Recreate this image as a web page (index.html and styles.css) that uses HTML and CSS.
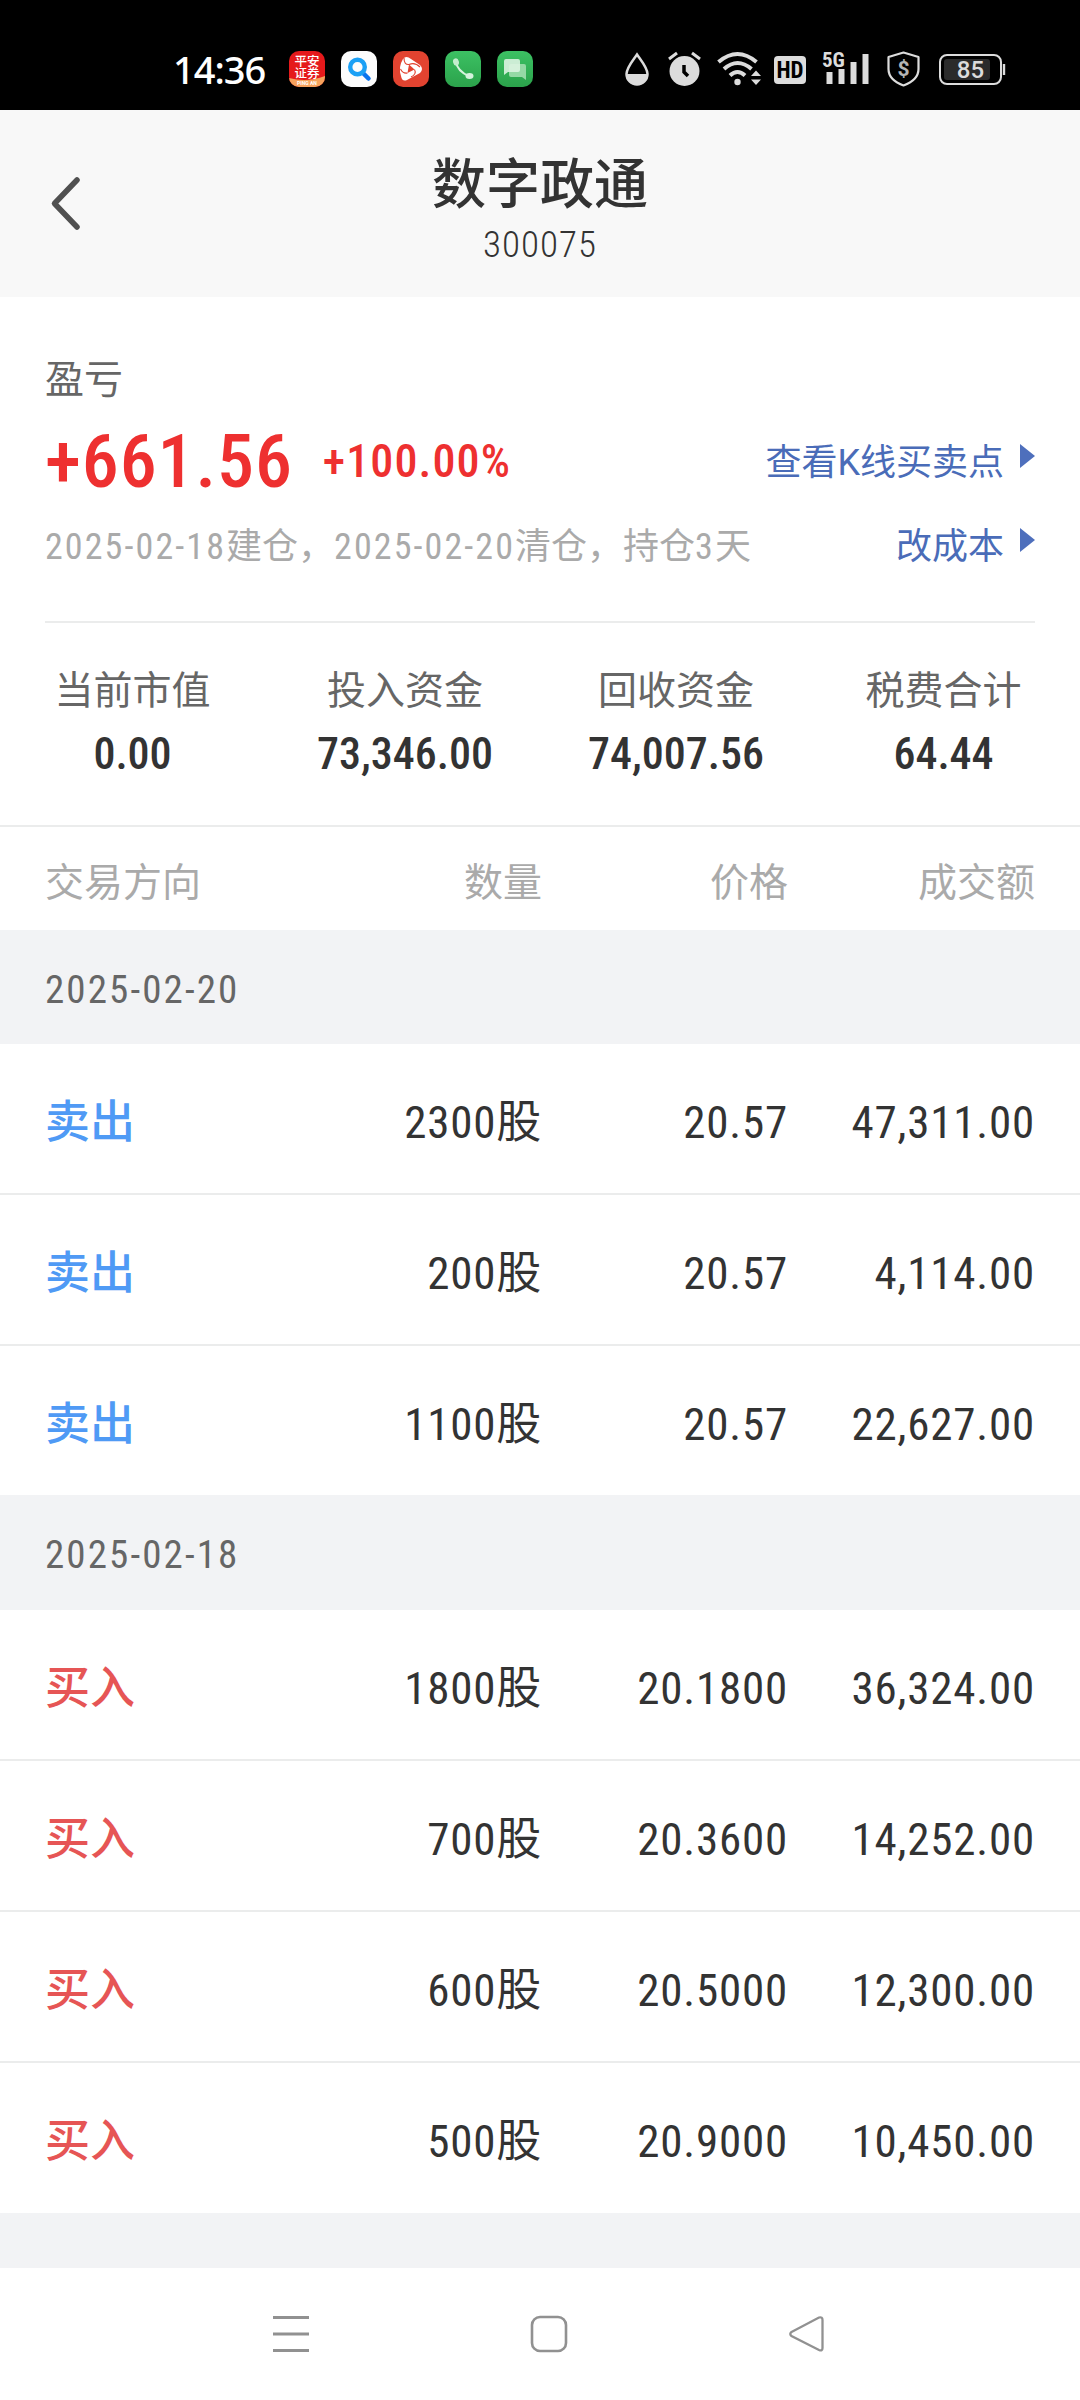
FILE: index.html
```html
<!DOCTYPE html>
<html lang="zh-CN">

<head>
    <meta charset="UTF-8">
    <meta name="viewport" content="width=device-width, initial-scale=1.0">
    <title>数字政通 300075</title>
    <link rel="stylesheet" href="styles.css">
</head>

<body>

    <div class="status-bar">
        <div class="clock">14:36</div>
        <div class="apps">
            <svg width="36" height="36" viewBox="0 0 36 36">
                <defs>
                    <clipPath id="appClip"><rect width="36" height="36" rx="10"/></clipPath>
                    <linearGradient id="green" x1="0" y1="0" x2="0" y2="1">
                        <stop offset="0" stop-color="#3cc163"/>
                        <stop offset="1" stop-color="#2ba24b"/>
                    </linearGradient>
                </defs>
                <g clip-path="url(#appClip)">
                    <rect width="36" height="36" fill="#e5191b"/>
                    <path d="M0 27Q18 32 36 25V36H0Z" fill="#f6a25c"/>
                    <text class="app-name" x="18" y="15" text-anchor="middle">平安</text>
                    <text class="app-name" x="18" y="26.500" text-anchor="middle">证券</text>
                    <text class="app-sub" x="18" y="34" text-anchor="middle">PING AN</text>
                </g>
            </svg>
            <svg width="36" height="36" viewBox="0 0 36 36">
                <rect width="36" height="36" rx="10" fill="#fcfcfc"/>
                <path d="M22 22L27.500 27.500" stroke="#0b74ee" stroke-width="4.500" stroke-linecap="round"/>
                <circle cx="16.500" cy="16" r="7.300" fill="none" stroke="#1ba0f5" stroke-width="4.400"/>
            </svg>
            <svg width="36" height="36" viewBox="0 0 36 36">
                <rect width="36" height="36" rx="10" fill="#e24330"/>
                <path d="M10 8Q13 4 18 8L27 14Q31 18 27 22L14 29Q9 31 8 25Q5 16 10 8Z" fill="#fff"/>
                <path d="M16 13.500L21.500 18.500L14.500 22Z" fill="#e24330"/>
                <path d="M16 13.500Q11 14 11 7M21.500 18.500Q24 23 18 26M14.500 22Q10 23 7.500 18M16 13.500Q22 11 27 16" fill="none" stroke="#e24330" stroke-width="1.100"/>
            </svg>
            <svg width="36" height="36" viewBox="0 0 36 36">
                <rect width="36" height="36" rx="10" fill="url(#green)"/>
                <path d="M11 10.500Q12 20 24.500 25.500" fill="none" stroke="#d5f3dd" stroke-width="2.200"/>
                <ellipse cx="11" cy="11" rx="2.900" ry="3.700" fill="#c4edce" transform="rotate(-15 11 11)"/>
                <ellipse cx="24.500" cy="25" rx="4" ry="2.900" fill="#d5f3dd"/>
            </svg>
            <svg width="36" height="36" viewBox="0 0 36 36">
                <rect width="36" height="36" rx="10" fill="url(#green)"/>
                <path d="M14 13H27Q29 13 29 15V29L25 26H14Q12 26 12 24V15Q12 13 14 13Z" fill="#95d9a5"/>
                <path d="M9 8H21Q23 8 23 10V19Q23 21 21 21H11L7 24V10Q7 8 9 8Z" fill="#dcf3e1" fill-opacity=".9"/>
            </svg>
        </div>
        <div class="system">
            <svg class="drop" width="24" height="36" viewBox="0 0 24 36">
                <path d="M12 3.500C7.500 10 1.500 17 1.500 23A10.500 10.500 0 0 0 22.500 23C22.500 17 16.500 10 12 3.500Z" fill="none" stroke="#dcdcdc" stroke-width="2.500"/>
                <path d="M1 23H23A11 11 0 0 1 1 23Z" fill="#dcdcdc"/>
            </svg>
            <svg class="alarm" width="31" height="36" viewBox="0 0 31 36">
                <circle cx="15.500" cy="20" r="15" fill="#dcdcdc"/>
                <path d="M0 8L8 2M31 8L23 2" stroke="#dcdcdc" stroke-width="3"/>
                <path d="M15 14V21L19 25" fill="none" stroke="#000" stroke-width="3.500"/>
            </svg>
            <svg class="wifi" width="44" height="36" viewBox="0 0 44 36">
                <g fill="none" stroke="#dcdcdc" stroke-width="4">
                    <path d="M1.500 11Q20.500-5 39.500 11"/>
                    <path d="M7 18Q20.500 6 34.500 18"/>
                    <path d="M13 24.500Q20.500 17.500 28 24.500"/>
                </g>
                <circle cx="20.500" cy="31" r="3.200" fill="#dcdcdc"/>
                <path d="M34 25L39 19.500L44 25ZM34 28.500H44L39 34Z" fill="#dcdcdc"/>
            </svg>
            <svg class="voice" width="32" height="36" viewBox="0 0 32 36">
                <rect y="5" width="32" height="28" rx="4" fill="#dcdcdc"/>
                <text class="hd" x="16" y="27" text-anchor="middle">HD</text>
            </svg>
            <svg class="signal" width="46" height="36" viewBox="0 0 46 36">
                <text class="net" x="-1" y="16">5G</text>
                <path d="M3.500 21H9.500V33H3.500ZM15.500 18H21.500V33H15.500ZM27.500 11H33.500V33H27.500ZM39.500 3H45.500V33H39.500Z" fill="#dcdcdc"/>
            </svg>
            <svg class="shield" width="33" height="36" viewBox="0 0 33 36">
                <path d="M16.500 1.500L31.500 6V18Q31.500 29 16.500 34.500Q1.500 29 1.500 18V6Z" fill="none" stroke="#dcdcdc" stroke-width="2.200" stroke-linejoin="round"/>
                <text class="dollar" x="16.500" y="25" text-anchor="middle">$</text>
            </svg>
            <svg class="battery" width="67" height="36" viewBox="0 0 67 36">
                <rect x="1" y="4" width="61" height="29" rx="7" fill="none" stroke="#dcdcdc" stroke-width="2"/>
                <rect x="5" y="8" width="46" height="21" rx="3" fill="#2b2b2b"/>
                <path d="M65 13V24" stroke="#dcdcdc" stroke-width="2.400"/>
                <text class="level" x="31.500" y="26.500" text-anchor="middle">85</text>
            </svg>
        </div>
    </div>

    <div class="header">
        <svg class="back" width="34" height="60" viewBox="0 0 34 60">
            <path d="M29 6L6.500 29.500L29 53" fill="none" stroke="#505050" stroke-width="5.500" stroke-linecap="round" stroke-linejoin="round"/>
        </svg>
        <h1>数字政通</h1>
        <div class="code">300075</div>
    </div>

    <div class="summary">
        <div class="label">盈亏</div>
        <div class="line profit">
            <span class="amount">+661.56</span>
            <span class="percent">+100.00%</span>
            <a class="link">查看K线买卖点<i class="arrow"></i></a>
        </div>
        <div class="line period">
            <span><span class="num">2025-02-18</span>建仓，<span class="num">2025-02-20</span>清仓，持仓<span class="num">3</span>天</span>
            <a class="link">改成本<i class="arrow"></i></a>
        </div>
    </div>

    <div class="stats">
        <div class="stat">当前市值<b>0.00</b></div>
        <div class="stat">投入资金<b>73,346.00</b></div>
        <div class="stat">回收资金<b>74,007.56</b></div>
        <div class="stat">税费合计<b>64.44</b></div>
    </div>

    <div class="trades">
        <div class="row head"><span>交易方向</span><span>数量</span><span>价格</span><span>成交额</span></div>

        <div class="date">2025-02-20</div>
        <div class="row"><span class="sell">卖出</span><span>2300股</span><span>20.57</span><span>47,311.00</span></div>
        <div class="row"><span class="sell">卖出</span><span>200股</span><span>20.57</span><span>4,114.00</span></div>
        <div class="row"><span class="sell">卖出</span><span>1100股</span><span>20.57</span><span>22,627.00</span></div>

        <div class="date">2025-02-18</div>
        <div class="row"><span class="buy">买入</span><span>1800股</span><span>20.1800</span><span>36,324.00</span></div>
        <div class="row"><span class="buy">买入</span><span>700股</span><span>20.3600</span><span>14,252.00</span></div>
        <div class="row"><span class="buy">买入</span><span>600股</span><span>20.5000</span><span>12,300.00</span></div>
        <div class="row"><span class="buy">买入</span><span>500股</span><span>20.9000</span><span>10,450.00</span></div>
    </div>

    <div class="nav">
        <svg width="38" height="38" viewBox="0 0 38 38">
            <path d="M1 2.500H37M1 19H37M1 35.500H37" stroke="#919191" stroke-width="3"/>
        </svg>
        <svg width="38" height="38" viewBox="0 0 38 38">
            <rect x="2" y="2" width="34" height="34" rx="8" fill="none" stroke="#919191" stroke-width="2.600"/>
        </svg>
        <svg width="38" height="38" viewBox="0 0 38 38">
            <path d="M3.500 17L31 2.500Q34.500 1.500 34.500 5V33Q34.500 36.500 31 35L3.500 21Q1 19 3.500 17Z" fill="none" stroke="#919191" stroke-width="2.300"/>
        </svg>
    </div>

</body>

</html>
```

FILE: styles.css
```css
* {
    box-sizing: border-box;
}

body {
    margin: 0;
    width: 1080px;
    height: 2400px;
    background: #fff;
    color: #333;
    font-family: "Roboto Condensed", Roboto, "Noto Sans CJK SC", sans-serif;
}

/* Phone status bar */
.status-bar {
    display: flex;
    align-items: flex-start;
    height: 110px;
    padding: 51px 74px 0 173px;
    background: #000;
}

.clock {
    width: 116px;
    color: #fff;
    font: 500 38px/37px "Noto Sans", sans-serif;
    letter-spacing: -1px;
}

.apps {
    display: flex;
    gap: 16px;
}

.system {
    display: flex;
    margin-left: 92px;
}

.system svg {
    overflow: visible;
}

.alarm {
    margin-left: 20px;
}

.wifi {
    margin-left: 17px;
}

.voice {
    margin-left: 13px;
}

.signal {
    margin-left: 17px;
}

.shield {
    margin-left: 18px;
}

.battery {
    margin-left: 19px;
}

.app-name {
    fill: #fff;
    font: 500 12.5px "Noto Sans CJK SC", sans-serif;
}

.app-sub {
    fill: #fff;
    font: 700 5px Roboto, sans-serif;
}

.hd {
    font: 700 23px "Roboto Condensed", Roboto, sans-serif;
}

.net {
    fill: #dcdcdc;
    font: 700 21px "Roboto Condensed", Roboto, sans-serif;
}

.dollar {
    fill: #b4b4b4;
    font: 700 21px Roboto, sans-serif;
}

.level {
    fill: #dcdcdc;
    font: 500 24px Roboto, sans-serif;
}

/* Title bar */
.header {
    position: relative;
    height: 187px;
    padding-top: 38px;
    background: #f8f8f8;
    text-align: center;
}

.back {
    position: absolute;
    left: 48px;
    top: 64px;
}

h1 {
    margin: 0;
    font: 500 54px/66px "Noto Sans CJK SC", sans-serif;
}

.code {
    font-size: 37px;
    font-weight: 300;
    line-height: 62px;
    letter-spacing: 1px;
}

/* Profit and loss */
.summary {
    height: 326px;
    margin: 0 45px;
    padding-top: 56px;
    border-bottom: 2px solid #ebecec;
}

.label {
    color: #666;
    font-size: 39px;
    line-height: 54px;
}

.line {
    display: flex;
    align-items: center;
}

.profit {
    height: 108px;
    color: #ee3030;
    font-weight: 500;
}

.amount {
    font-size: 74px;
    letter-spacing: 0.9px;
}

.percent {
    margin-left: 30px;
    font-size: 46px;
    letter-spacing: 1.1px;
}

.period {
    height: 56px;
    color: #aaa;
    font-size: 36px;
}

.num {
    letter-spacing: 2.1px;
}

.link {
    display: flex;
    align-items: center;
    margin-left: auto;
    padding-bottom: 4px;
    color: #4a6cb8;
    font-family: Roboto, "Noto Sans CJK SC", sans-serif;
    font-size: 36px;
    font-weight: 400;
}

.period .link {
    padding-bottom: 0;
}

.arrow {
    margin: -6px 0 0 16px;
    border-left: 15px solid #4e6fbc;
    border-top: 12px solid transparent;
    border-bottom: 12px solid transparent;
}

/* Totals */
.stats {
    display: grid;
    grid-template-columns: 265px 280px 262px 273px;
    height: 204px;
    padding-top: 40px;
    border-bottom: 2px solid #ebecec;
    text-align: center;
}

.stat {
    color: #666;
    font-size: 39px;
    line-height: 56px;
}

.stat b {
    display: block;
    color: #333;
    font-size: 44px;
    font-weight: 500;
    line-height: 70px;
}

/* Trade list */
.row {
    display: grid;
    grid-template-columns: 245px 252px 246px 247px;
    align-items: baseline;
    height: 151px;
    padding: 49px 45px 0;
    border-bottom: 2px solid #ebecec;
    font-size: 45px;
    line-height: 60px;
    letter-spacing: 0.8px;
    text-align: right;
}

.row span:first-child {
    text-align: left;
}

.head {
    height: 103px;
    padding-top: 26px;
    border: none;
    color: #aaa;
    font-size: 39px;
    letter-spacing: 0;
}

.date {
    height: 115px;
    margin-top: -2px;
    padding-left: 45px;
    background: #f2f3f5;
    color: #666;
    font-size: 39px;
    line-height: 120px;
    letter-spacing: 2.1px;
}

.head + .date {
    height: 114px;
    margin-top: 0;
}

.sell,
.buy {
    font-weight: 500;
    letter-spacing: 0;
}

.sell {
    color: #4f9af5;
}

.buy {
    color: #e65555;
}

.trades {
    height: 1441px;
    background: linear-gradient(#fff 1386px, #f2f3f5 1386px);
}

.row:last-child {
    border-bottom: none;
}

/* Phone navigation keys */
.nav {
    display: flex;
    gap: 220px;
    padding: 47px 0 0 272px;
}
```
